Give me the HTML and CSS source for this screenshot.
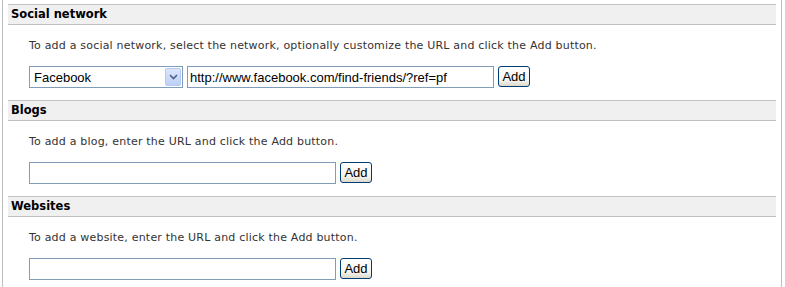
FILE: index.html
```html
<!DOCTYPE html>
<html lang="en">
<head>
    <meta charset="UTF-8">
    <title>Profile links</title>
    <link rel="stylesheet" href="styles.css">
</head>
<body>
    <div class="panel">
        <div class="section">
            <h2 class="section-title">Social network</h2>
            <p class="section-help">To add a social network, select the network, optionally customize the URL and click the Add button.</p>
            <div class="add-row">
                <div class="select-box">
                    <select class="network-select">
                        <option>Facebook</option>
                        <option>Twitter</option>
                        <option>LinkedIn</option>
                        <option>MySpace</option>
                    </select>
                    <span class="select-arrow">
                        <svg width="9" height="6" viewBox="0 0 9 6"><path d="M1 1 L4.5 4.5 L8 1" fill="none" stroke="#4d6185" stroke-width="1.6"/></svg>
                    </span>
                </div>
                <input type="text" class="url-input" value="http://www.facebook.com/find-friends/?ref=pf">
                <button class="add-btn">Add</button>
            </div>
        </div>

        <div class="section">
            <h2 class="section-title">Blogs</h2>
            <p class="section-help">To add a blog, enter the URL and click the Add button.</p>
            <div class="add-row">
                <input type="text" class="url-input">
                <button class="add-btn">Add</button>
            </div>
        </div>

        <div class="section">
            <h2 class="section-title">Websites</h2>
            <p class="section-help">To add a website, enter the URL and click the Add button.</p>
            <div class="add-row">
                <input type="text" class="url-input">
                <button class="add-btn">Add</button>
            </div>
        </div>
    </div>
</body>
</html>
```

FILE: styles.css
```css
body {
    margin: 0;
    background: white;
    font-family: "DejaVu Sans", Verdana, sans-serif;
}

.panel {
    width: 768px;
    margin-left: 2px;
    padding: 4px 5px 0 5px;
    height: 283px;
    border-left: 1px solid #c0c0c0;
    border-right: 1px solid #c0c0c0;
}

.section {
    padding-bottom: 12px;
}

.section-title {
    margin: 0;
    height: 19px;
    line-height: 19px;
    padding-left: 3px;
    font-size: 11.5px;
    font-weight: bold;
    color: #000;
    background-color: #f0f0f0;
    border-top: 1px solid #c0c0c0;
    border-bottom: 1px solid #c0c0c0;
}

.section-help {
    margin: 14px 0 13px 21px;
    line-height: 14px;
    font-size: 11px;
    letter-spacing: 0.2px;
    color: #333;
}

.add-row {
    display: flex;
    align-items: flex-start;
    gap: 4px;
    margin-left: 21px;
}

.select-box {
    display: flex;
    align-items: center;
    box-sizing: border-box;
    width: 154px;
    height: 22px;
    border: 1px solid #7f9db9;
    padding: 1px;
}

.network-select {
    flex: 1;
    appearance: none;
    -webkit-appearance: none;
    border: none;
    outline: none;
    background: white;
    height: 18px;
    padding: 0 0 0 3px;
    font-family: "Liberation Sans", Arial, sans-serif;
    font-size: 13px;
    color: #000;
}

.select-arrow {
    display: flex;
    align-items: center;
    justify-content: center;
    box-sizing: border-box;
    width: 16px;
    height: 18px;
    border: 1px solid #b6c9f2;
    border-radius: 2px;
    background: linear-gradient(#dbe6fd, #bcd0f8);
}

.url-input {
    box-sizing: border-box;
    width: 307px;
    height: 22px;
    border: 1px solid #7f9db9;
    padding: 0 2px;
    font-family: "Liberation Sans", Arial, sans-serif;
    font-size: 13px;
    color: #000;
    outline: none;
}

.add-btn {
    box-sizing: border-box;
    width: 32px;
    height: 21px;
    padding: 0;
    border: 1px solid #003c74;
    border-radius: 3px;
    background: linear-gradient(#ffffff, #f4f3ee 70%, #dcd9cc);
    font-family: "Liberation Sans", Arial, sans-serif;
    font-size: 13px;
    color: #000;
    cursor: pointer;
}
```
